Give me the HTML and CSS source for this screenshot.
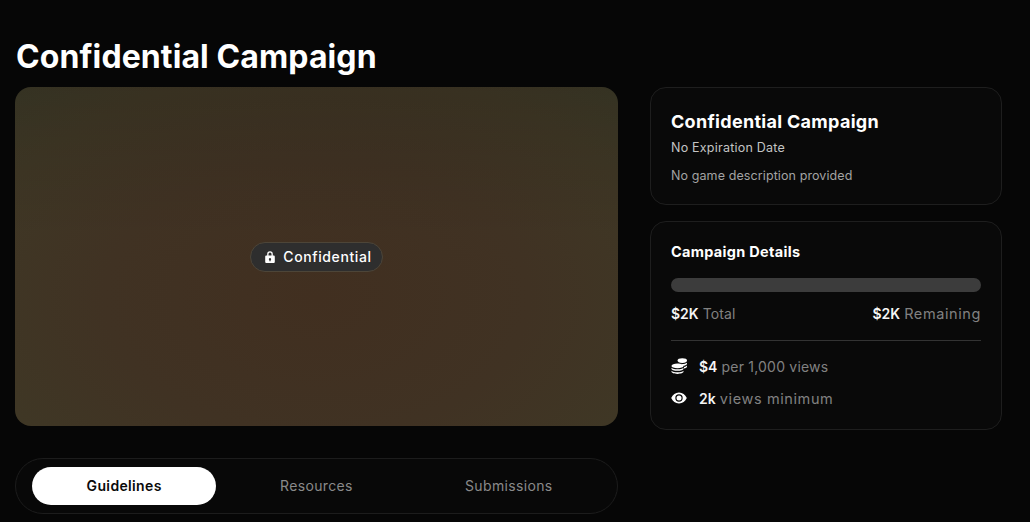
FILE: index.html
```html
<!DOCTYPE html>
<html lang="en">
<head>
<meta charset="utf-8">
<title>Confidential Campaign</title>
<link rel="stylesheet" href="styles.css">
</head>
<body>
<h1 class="page-title">Confidential Campaign</h1>
<div class="layout">
  <main class="main-col">
    <div class="hero">
      <span class="badge">
        <svg class="lock" viewBox="0 0 12 14" width="12" height="14"><path fill="#fff" fill-rule="evenodd" d="M3.2 5.5V4a2.8 2.8 0 0 1 5.6 0v1.500h.7c.8 0 1.300.5 1.300 1.300v5c0 .8-.5 1.300-1.300 1.300h-7c-.8 0-1.300-.5-1.300-1.300v-5c0-.8.5-1.300 1.300-1.300zm1.300 0h3V4a1.500 1.500 0 0 0-3 0zM6 8a1.200 1.200 0 0 0-.6 2.200v1h1.200v-1A1.200 1.200 0 0 0 6 8z"/></svg>
        <span class="badge-text">Confidential</span>
      </span>
    </div>
    <nav class="tabs">
      <a class="tab tab-active">Guidelines</a>
      <a class="tab">Resources</a>
      <a class="tab">Submissions</a>
    </nav>
  </main>
  <aside class="side-col">
    <section class="card card-info">
      <h2 class="card-title">Confidential Campaign</h2>
      <p class="expiry">No Expiration Date</p>
      <p class="desc">No game description provided</p>
    </section>
    <section class="card card-details">
      <h3 class="details-title">Campaign Details</h3>
      <div class="bar"></div>
      <div class="totals">
        <span><b>$2K</b> Total</span>
        <span><b>$2K</b> <span class="wide">Remaining</span></span>
      </div>
      <hr class="divider">
      <div class="stat">
        <svg class="stat-icon" viewBox="0 0 16 16" width="16" height="16"><g fill="#fff"><ellipse cx="11.300" cy="2.600" rx="4.700" ry="2.300"/><path d="M7.500 5.300c1 .4 2.300.7 3.800.7 1.800 0 3.500-.5 4.700-1.300v1.100c0 1-1.500 1.800-3.500 2.100-1-1.200-2.800-2.100-5-2.300z"/><path d="M13 9c1.400-.3 2.400-.8 3-1.500v1.300c0 .8-1.200 1.500-3 1.800z"/><ellipse cx="6.500" cy="7.900" rx="6" ry="2.300"/><path d="M.5 9.700c1.200 1 3.400 1.500 6 1.500s4.800-.5 6-1.500v1c0 1.200-2.700 2.100-6 2.100s-6-.9-6-2.100z"/><path d="M.5 12.700c1.200 1 3.400 1.500 6 1.500s4.800-.5 6-1.500v.9c0 1.300-2.700 2.300-6 2.300s-6-1-6-2.300z"/></g></svg>
        <span><b>$4</b> per 1,000 views</span>
      </div>
      <div class="stat">
        <svg class="stat-icon" viewBox="0 0 16 12" width="16" height="12"><path fill="#fff" fill-rule="evenodd" d="M8 .5C4.500.5 1.700 2.700.2 6c1.500 3.300 4.300 5.500 7.800 5.500s6.300-2.200 7.800-5.500C14.300 2.700 11.500.5 8 .5zM8 2.300a3.700 3.700 0 1 1 0 7.400 3.700 3.700 0 0 1 0-7.400z"/><circle cx="8" cy="6" r="2.500" fill="#fff"/></svg>
        <span><b>2k</b> <span class="wide">views minimum</span></span>
      </div>
    </section>
  </aside>
</div>
</body>
</html>
```
FILE: styles.css
```css
* { box-sizing: border-box; }
html, body { height: 522px; overflow: hidden; }
body {
  margin: 0;
  padding: 38px 28px 0 15px;
  background: #060606;
  color: #fff;
  font-family: "Inter", "Liberation Sans", sans-serif;
}
.page-title {
  margin: 0 0 11px 1px;
  font-size: 32px;
  line-height: 38px;
  font-weight: 700;
  letter-spacing: 0.1px;
}
.layout { display: flex; gap: 32px; align-items: flex-start; }
.main-col { width: 603px; flex: none; }
.side-col { width: 352px; flex: none; display: flex; flex-direction: column; gap: 16px; }
.hero {
  height: 339px;
  border-radius: 16px;
  display: flex;
  align-items: center;
  justify-content: center;
  background:
    linear-gradient(180deg, rgba(0, 0, 0, 0.12), rgba(0, 0, 0, 0) 45%),
    radial-gradient(ellipse 78% 90% at 50% 62%, #412f20 0%, #403223 45%, #3f3725 75%, #3b3a28 100%);
}
.badge {
  display: inline-flex;
  align-items: center;
  gap: 7px;
  height: 30px;
  padding: 0 10px 0 13px;
  border-radius: 15px;
  background: #2e2e2e;
  border: 1px solid #4d4538;
  font-size: 14px;
  font-weight: 500;
}
.badge-text { letter-spacing: 0.6px; }
.tabs {
  margin-top: 32px;
  height: 56px;
  border: 1px solid #1c1c1c;
  border-radius: 28px;
  background: #080808;
  padding: 8px 16px;
  display: grid;
  grid-template-columns: repeat(3, 1fr);
  gap: 8px;
}
.tab {
  display: flex;
  align-items: center;
  justify-content: center;
  padding-bottom: 1px;
  border-radius: 19px;
  font-size: 14px;
  color: #8a8a8a;
  letter-spacing: 0.35px;
}
.tab-active { background: #fff; color: #0a0a0a; font-weight: 600; }
.card {
  background: #090909;
  border: 1px solid #1e1e1e;
  border-radius: 16px;
  padding: 0 20px;
}
.card-info { height: 118px; padding-top: 23px; }
.card-title { margin: 0; font-size: 18px; line-height: 22px; font-weight: 700; letter-spacing: 0.3px; }
.expiry { margin: 6px 0 0; font-size: 12.5px; line-height: 18px; color: #c4c4c4; letter-spacing: 0.22px; }
.desc { margin: 10px 0 0; font-size: 12.5px; line-height: 18px; color: #a3a3a3; letter-spacing: 0.1px; }
.card-details { height: 209px; padding-top: 21px; }
.details-title { margin: 0; font-size: 14.5px; line-height: 18px; font-weight: 700; letter-spacing: 0.3px; }
.bar { margin-top: 17px; height: 14px; border-radius: 7px; background: #3c3c3c; }
.totals {
  margin-top: 12px;
  display: flex;
  justify-content: space-between;
  font-size: 14px;
  line-height: 20px;
  color: #818181;
  letter-spacing: 0.1px;
}
.totals b, .stat b { color: #f5f5f5; font-weight: 600; letter-spacing: 0; }
.wide { font-size: 14.5px; letter-spacing: 0.6px; }
.divider { margin: 16px 0 0; border: 0; border-top: 1px solid #333; }
.stat {
  display: flex;
  align-items: center;
  gap: 12px;
  height: 20px;
  font-size: 14px;
  color: #818181;
  letter-spacing: 0.2px;
  margin-top: 12px;
}
.divider + .stat { margin-top: 15px; }
.stat-icon { flex: none; }
```
